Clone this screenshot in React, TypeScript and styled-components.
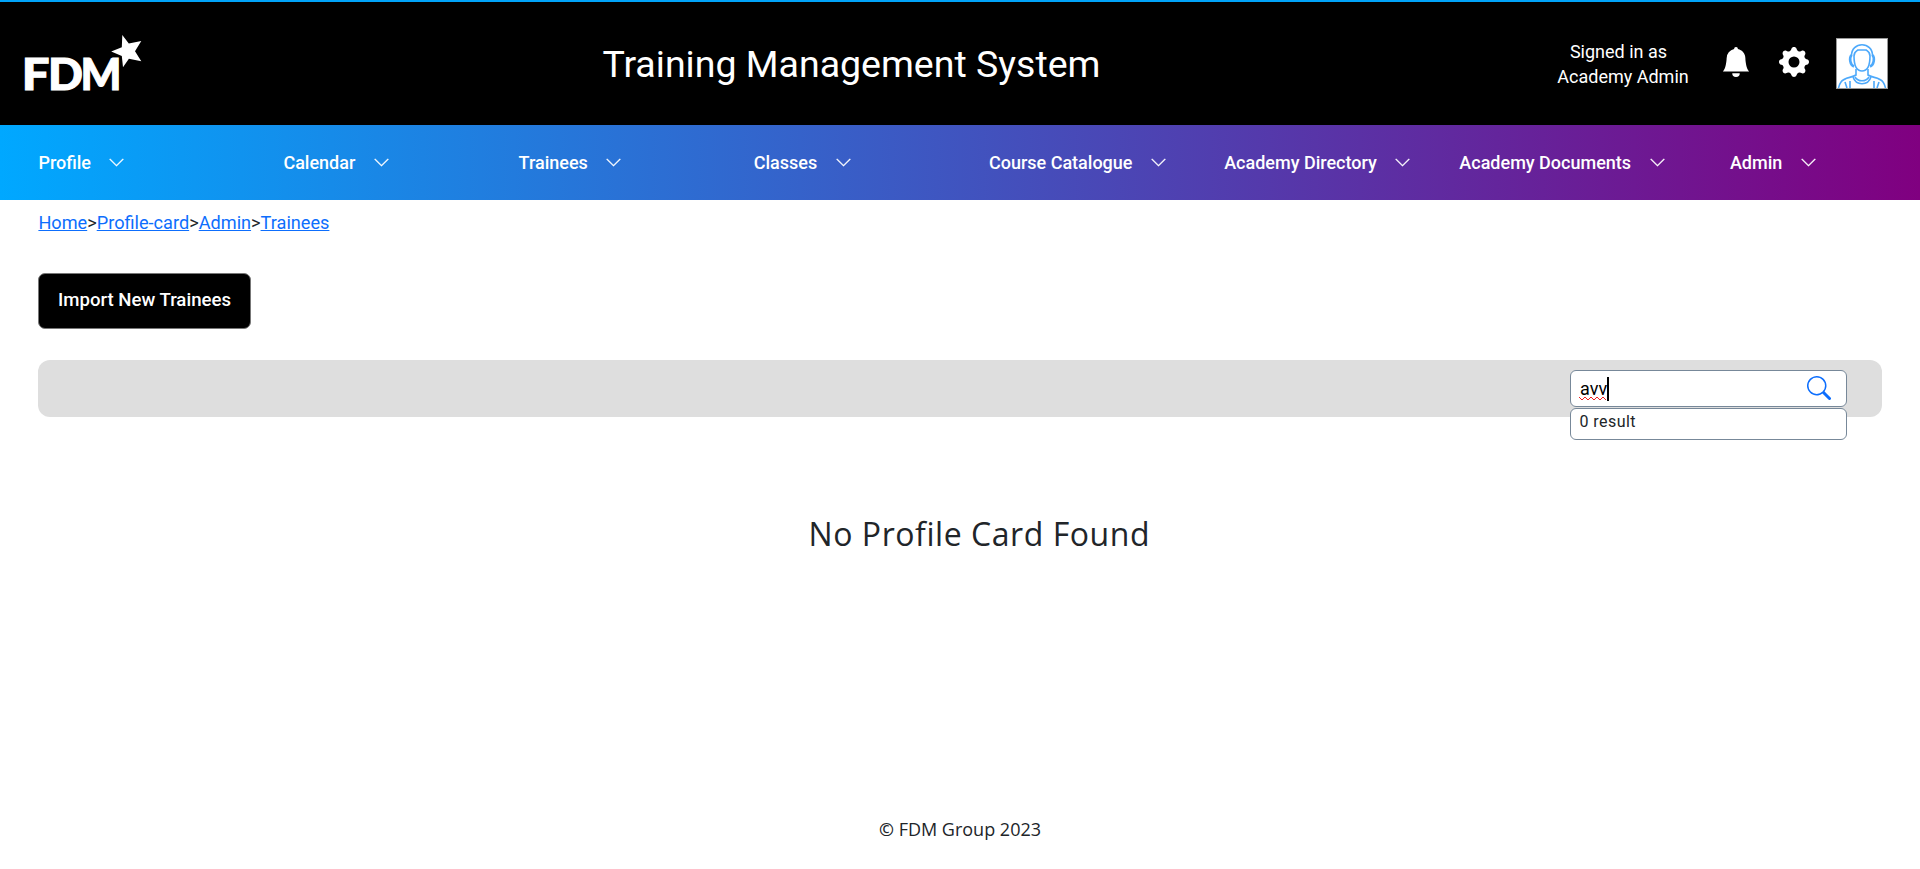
import React from "react";
import styled, { createGlobalStyle } from "styled-components";
import { BsBellFill, BsChevronDown, BsGearFill, BsSearch } from "react-icons/bs";

const GlobalStyle = createGlobalStyle`
  *, *::before, *::after { box-sizing: border-box; }
  body {
    margin: 0;
    background: #fff;
    color: #212529;
    font-family: Roboto, "Liberation Sans", sans-serif;
    font-size: 18px;
    line-height: 1.5;
  }
`;

const Page = styled.div`
  display: flex;
  flex-direction: column;
  height: 869px;
`;

const Header = styled.header`
  display: grid;
  grid-template-columns: 602.4px 1fr auto;
  align-items: center;
  height: 125px;
  padding-right: 32px;
  border-top: 2px solid #00a3f8;
  background: #000;
  color: #fff;
`;

const Logo = styled.svg`
  display: block;
  margin-left: 14px;
  overflow: visible;
`;

const LogoText = styled.text`
  font-family: Lato, sans-serif;
  font-weight: 900;
  font-size: 44px;
  fill: #fff;
  stroke: #fff;
  stroke-width: 1px;
`;

const Title = styled.h1`
  margin: 0;
  font-size: 37.5px;
  font-weight: 400;
  line-height: 44px;
  white-space: nowrap;
`;

const UserTools = styled.div`
  display: flex;
  align-items: center;
  svg { display: block; }
`;

const SignedIn = styled.div`
  display: flex;
  flex-direction: column;
  align-items: center;
  width: 132px;
  margin-right: 32px;
  line-height: 25px;
  white-space: nowrap;
`;

const StatusLine = styled.span`
  padding-right: 9px;
`;

const IconButton = styled.span<{ $gap: number }>`
  margin: -2px ${(p) => p.$gap}px 2px 0;
`;

const Avatar = styled.div`
  width: 52px;
  height: 51px;
  border: 1px solid #999;
  background: #fff;
`;

const Nav = styled.nav`
  display: grid;
  grid-template-columns: 245px repeat(5, 235.2px) 270.6px 1fr;
  align-items: center;
  height: 75px;
  padding-left: 38.4px;
  background: linear-gradient(to right, #00a8ff, #800080);
  color: #fff;
`;

const NavItem = styled.div`
  display: flex;
  align-items: center;
  gap: 17.5px;
  font-weight: 500;
  white-space: nowrap;
  svg { stroke: currentColor; stroke-width: 0.3px; }
`;

const Main = styled.main`
  display: flex;
  flex-direction: column;
  align-items: flex-start;
  flex: 1;
  padding: 9px 38px 0;
`;

const Breadcrumbs = styled.div`
  height: 27px;
  padding-left: 0.4px;
  font-size: 18.15px;
  a { color: #0d6efd; text-decoration: underline; }
`;

const ImportButton = styled.button`
  width: 213px;
  height: 56px;
  margin-top: 37px;
  padding: 0 0 2px;
  border: 1px solid #777;
  border-radius: 7px;
  background: #000;
  color: #fff;
  font: 500 18.6px Roboto, sans-serif;
`;

const FilterBar = styled.section`
  display: flex;
  justify-content: flex-end;
  align-self: stretch;
  height: 57px;
  margin-top: 31px;
  padding: 10px 35px 0 0;
  border-radius: 12px;
  background: #dedede;
`;

const Search = styled.div`
  width: 277px;
`;

const SearchField = styled.div`
  display: flex;
  justify-content: space-between;
  height: 37px;
  padding: 5px 15px 0 9px;
  border: 1px solid #778899;
  border-radius: 6px;
  background: #fff;
  color: #000;
  svg { display: block; color: #0d6efd; }
`;

const Query = styled.span`
  position: relative;
  height: 24px;
  margin-top: 1px;
  border-right: 2px solid #000;
  line-height: 24px;
`;

const Squiggle = styled.svg`
  position: absolute;
  left: -1px;
  bottom: 0;
`;

const Results = styled.div`
  height: 32px;
  margin-top: 1px;
  padding-left: 8.5px;
  border: 1px solid #778899;
  border-radius: 6px;
  background: #fff;
  font-size: 16px;
  line-height: 25px;
  letter-spacing: 0.45px;
`;

const EmptyMessage = styled.h2`
  align-self: center;
  margin: 93px 0 0 38.6px;
  font: 400 32px/48px "Open Sans", sans-serif;
  letter-spacing: 0.55px;
`;

const Footer = styled.footer`
  height: 53px;
  text-align: center;
  font: 400 18px/26px "Open Sans", sans-serif;
`;

const Copyright = styled.span`
  font-weight: 600;
`;

const menus = [
  "Profile",
  "Calendar",
  "Trainees",
  "Classes",
  "Course Catalogue",
  "Academy Directory",
  "Academy Documents",
  "Admin",
];

const crumbs = ["Home", "Profile-card", "Admin", "Trainees"];

function FdmLogo() {
  return (
    <Logo width="140" height="91" viewBox="0 0 140 91" aria-label="FDM">
      <LogoText transform="translate(7.8 72) scale(1.116 1.01)">F</LogoText>
      <LogoText transform="translate(34 72) scale(1.044 1.01)">D</LogoText>
      <LogoText transform="translate(66.5 72) scale(0.98 1.01)">M</LogoText>
      <path
        fill="#fff"
        d="M108.3 17 114.8 25.4 127.3 23 121 33.2 127.3 43.2 114.9 40.8 109 49.3 107.8 38 97.2 33.4 107.8 29.2Z"
      />
    </Logo>
  );
}

function Person() {
  return (
    <svg width="50" height="49" viewBox="0 0 50 49" fill="none" stroke="#4da9fb" strokeWidth="1.6">
      <path d="M14.5 17C14 2 36 2 35.5 17" />
      <path d="M17 17C17 13 19 12.5 21 11H29C31 12.5 33 13 33 17C33 26 31 32 25 32S17 26 17 17Z" />
      <path d="M14.5 16C12 19 13 26 17 27.5M35.5 16C38 19 37 26 33 27.5" strokeWidth="2.6" />
      <path d="M19 30V36C15 39 7 38 4 43C2.500 45 2 47 1.500 49M31 30V36C35 39 43 38 46 43C47.500 45 48 47 48.500 49" />
      <path d="M18 38C21 43 29 43 32 38M16 38C19 47 31 47 34 38" />
      <path d="M8 43 10 49M13 42V49M42 43 40 49M37 42V49" />
    </svg>
  );
}

export default function App() {
  return (
    <Page>
      <GlobalStyle />
      <Header>
        <FdmLogo />
        <Title>Training Management System</Title>
        <UserTools>
          <SignedIn>
            <StatusLine>Signed in as</StatusLine>
            <span>Academy Admin</span>
          </SignedIn>
          <IconButton $gap={28}>
            <BsBellFill size={30} />
          </IconButton>
          <IconButton $gap={27}>
            <BsGearFill size={30} />
          </IconButton>
          <Avatar>
            <Person />
          </Avatar>
        </UserTools>
      </Header>
      <Nav>
        {menus.map((label) => (
          <NavItem key={label}>
            {label}
            <BsChevronDown size={17} />
          </NavItem>
        ))}
      </Nav>
      <Main>
        <Breadcrumbs>
          {crumbs.map((label, i) => (
            <React.Fragment key={label}>
              {i > 0 && ">"}
              <a href="#">{label}</a>
            </React.Fragment>
          ))}
        </Breadcrumbs>
        <ImportButton>Import New Trainees</ImportButton>
        <FilterBar>
          <Search>
            <SearchField>
              <Query>
                avv
                <Squiggle width="29" height="5" viewBox="0 0 29 5" fill="none" stroke="#f02020">
                  <path d="M0 1 3 4 6 1 9 4 12 1 15 4 18 1 21 4 24 1 27 4" />
                </Squiggle>
              </Query>
              <BsSearch size={24} />
            </SearchField>
            <Results>0 result</Results>
          </Search>
        </FilterBar>
        <EmptyMessage>No Profile Card Found</EmptyMessage>
      </Main>
      <Footer>
        <Copyright>©</Copyright> FDM Group 2023
      </Footer>
    </Page>
  );
}
